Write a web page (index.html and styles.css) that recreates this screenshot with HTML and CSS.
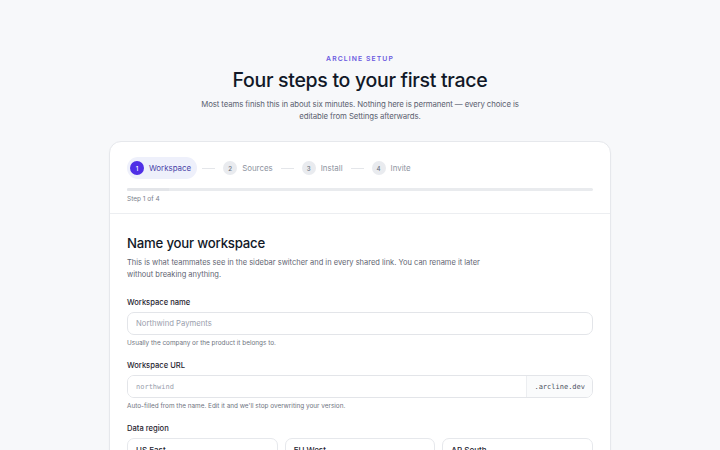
FILE: index.html
```html
<!DOCTYPE html>
<html lang="en">
<head>
<meta charset="utf-8">
<title>Arcline setup</title>
<link rel="stylesheet" href="styles.css">
</head>
<body>
<main class="page">
  <header class="intro">
    <p class="eyebrow">ARCLINE SETUP</p>
    <h1 class="title">Four steps to your first trace</h1>
    <p class="lede">Most teams finish this in about six minutes. Nothing here is permanent — every choice is editable from Settings afterwards.</p>
  </header>

  <section class="card">
    <div class="card-head">
      <ol class="steps">
        <li class="step is-current"><span class="num">1</span><span class="label">Workspace</span></li>
        <li class="sep"></li>
        <li class="step"><span class="num">2</span><span class="label">Sources</span></li>
        <li class="sep"></li>
        <li class="step"><span class="num">3</span><span class="label">Install</span></li>
        <li class="sep"></li>
        <li class="step"><span class="num">4</span><span class="label">Invite</span></li>
      </ol>
      <div class="track"><div class="fill"></div></div>
      <p class="count">Step 1 of 4</p>
    </div>

    <div class="card-body">
      <h2 class="section-title">Name your workspace</h2>
      <p class="section-desc">This is what teammates see in the sidebar switcher and in every shared link. You can rename it later without breaking anything.</p>

      <div class="field">
        <label class="field-label" for="ws-name">Workspace name</label>
        <input class="input" id="ws-name" type="text" placeholder="Northwind Payments">
        <p class="hint">Usually the company or the product it belongs to.</p>
      </div>

      <div class="field">
        <label class="field-label" for="ws-url">Workspace URL</label>
        <div class="input-group">
          <input class="input mono" id="ws-url" type="text" placeholder="northwind">
          <span class="suffix">.arcline.dev</span>
        </div>
        <p class="hint">Auto-filled from the name. Edit it and we'll stop overwriting your version.</p>
      </div>

      <div class="field">
        <span class="field-label">Data region</span>
        <div class="regions">
          <div class="region"><span class="region-name">US East</span></div>
          <div class="region"><span class="region-name">EU West</span></div>
          <div class="region"><span class="region-name">AP South</span></div>
        </div>
      </div>
    </div>
  </section>
</main>
</body>
</html>
```

FILE: styles.css
```css
* { box-sizing: border-box; }

html, body {
  margin: 0;
  padding: 0;
  background: #f7f8fa;
  font-family: "Inter", "Noto Sans", sans-serif;
  color: #111827;
}

.page {
  width: 502px;
  margin: 0 auto;
  padding-top: 54px;
}

.intro {
  text-align: center;
  margin-bottom: 19px;
}

.eyebrow {
  margin: 0;
  font-size: 6.8px;
  font-weight: 600;
  letter-spacing: 1.1px;
  color: #6a5ae0;
  line-height: 9px;
}

.title {
  margin: 4px 0 0;
  font-size: 19.5px;
  font-weight: 500;
  letter-spacing: -0.3px;
  line-height: 27px;
  color: #111827;
}

.lede {
  margin: 4px auto 0;
  width: 324px;
  font-size: 7.8px;
  letter-spacing: -0.1px;
  line-height: 12px;
  color: #5b6170;
}

.card {
  background: #fff;
  border: 1px solid #e6e8ec;
  border-radius: 12px;
  box-shadow: 0 1px 2px rgba(17, 24, 39, 0.03);
  overflow: hidden;
}

.card-head {
  padding: 15px 17px 9px;
  border-bottom: 1px solid #eceef1;
}

.steps {
  list-style: none;
  margin: 0;
  padding: 0;
  display: flex;
  align-items: center;
  gap: 5px;
}

.step {
  display: flex;
  align-items: center;
  gap: 5px;
  height: 22px;
  padding: 0 3px;
  border-radius: 11px;
  font-size: 7.9px;
  color: #8d93a0;
}

.step .num {
  width: 14px;
  height: 14px;
  border-radius: 50%;
  background: #e9ebef;
  color: #6b7280;
  font-size: 6.2px;
  font-weight: 500;
  display: flex;
  align-items: center;
  justify-content: center;
}

.step.is-current {
  background: #eef0fb;
  padding-right: 6px;
  color: #4a45a8;
}

.step.is-current .num {
  background: #4f2fe6;
  color: #fff;
}

.sep {
  width: 13px;
  height: 1px;
  background: #e4e6ea;
}

.track {
  margin-top: 9px;
  height: 3px;
  border-radius: 2px;
  background: #e9ebee;
  overflow: hidden;
}

.fill {
  width: 9%;
  height: 100%;
  background: #e3e5e9;
}

.count {
  margin: 3px 0 0;
  font-size: 6.5px;
  color: #7a808c;
  line-height: 10px;
}

.card-body {
  padding: 20px 17px 20px;
}

.section-title {
  margin: 0;
  font-size: 13.2px;
  font-weight: 500;
  letter-spacing: -0.2px;
  line-height: 19px;
  color: #111827;
}

.section-desc {
  margin: 4px 0 0;
  width: 375px;
  font-size: 7.5px;
  line-height: 12px;
  color: #5f6572;
}

.field {
  margin-top: 16px;
}

.field + .field {
  margin-top: 12px;
}

.field-label {
  display: block;
  font-size: 7.6px;
  font-weight: 500;
  color: #1f2430;
  line-height: 11px;
  margin-bottom: 4px;
}

.input {
  display: block;
  width: 100%;
  height: 23px;
  border: 1px solid #e3e5e9;
  border-radius: 7px;
  padding: 0 8px;
  font-family: inherit;
  font-size: 7.7px;
  color: #111827;
  background: #fff;
  outline: none;
}

.input::placeholder {
  color: #9aa0ad;
}

.mono {
  font-family: "DejaVu Sans Mono", "Liberation Mono", monospace;
  font-size: 7px;
}

.hint {
  margin: 3px 0 0;
  font-size: 6.4px;
  line-height: 10px;
  color: #6f7581;
}

.input-group {
  display: flex;
  height: 23px;
  border: 1px solid #e3e5e9;
  border-radius: 7px;
  overflow: hidden;
}

.input-group .input {
  border: 0;
  border-radius: 0;
  height: 100%;
  flex: 1;
}

.suffix {
  display: flex;
  align-items: center;
  padding: 0 7px;
  background: #fafbfc;
  border-left: 1px solid #eceef1;
  font-family: "DejaVu Sans Mono", "Liberation Mono", monospace;
  font-size: 7px;
  color: #4b5160;
}

.regions {
  display: grid;
  grid-template-columns: repeat(3, 1fr);
  gap: 7px;
}

.region {
  height: 40px;
  border: 1px solid #e6e8ec;
  border-radius: 7px;
  padding: 2px 8px;
  line-height: 12px;
}

.region-name {
  font-size: 8px;
  font-weight: 500;
  color: #1f2430;
}
```
